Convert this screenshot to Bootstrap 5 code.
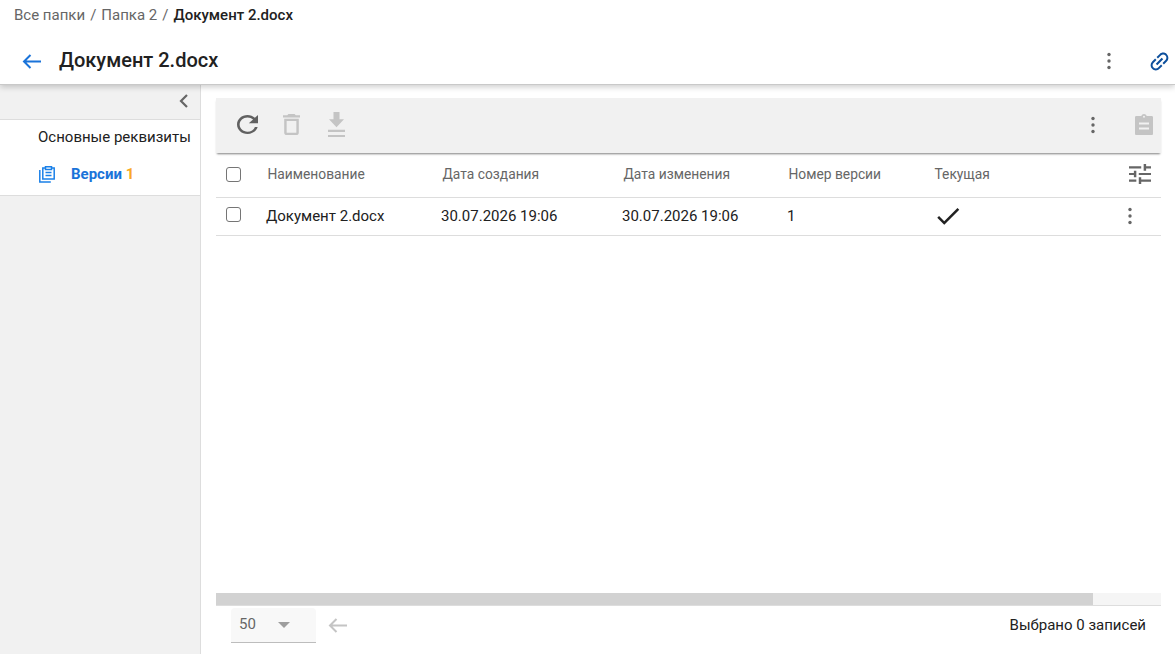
<!DOCTYPE html>
<html lang="ru">
<head>
  <meta charset="UTF-8" />
  <title>Документ 2.docx</title>
  <link href="https://cdn.jsdelivr.net/npm/bootstrap@5.3.3/dist/css/bootstrap.min.css" rel="stylesheet" />
  <style>
    html, body { height: 100%; overflow: hidden; }
    body { font-family: Roboto, "Liberation Sans", sans-serif; font-size: 15px; color: #212121; background: #fff; }
    .page-shell { height: 654px; }
    .top-head { height: 85px; border-bottom: 1px solid #c9c9c9; box-shadow: 0 2px 6px rgba(0,0,0,.2); position: relative; z-index: 2; background: #fff; }
    .crumbs { height: 31px; padding-left: 14px; color: #666; font-size: 15px; gap: 5px; }
    .crumbs b { font-weight: 500; color: #212121; }
    .title-row { height: 53px; padding: 4px 3px 0 22px; }
    .title-row h1 { font-size: 20px; font-weight: 500; margin: 0 0 0 18px; color: #212121; }
    .nudge { margin-top: 3px; }
    .side { width: 201px; flex: none; background: #f1f1f1; border-right: 1px solid #ddd; }
    .side-toggle { height: 34px; padding: 0 12px 2px 0; }
    .side-list { background: #fff; border-top: 1px solid #ddd; border-bottom: 1px solid #ddd; height: 77px; }
    .side-item { height: 35px; font-size: 15px; padding-left: 38px; color: #212121; }
    .side-item.on { padding-left: 39px; font-weight: 700; color: #1a73d9; gap: 16px; height: 38px; }
    .side-item .cnt { color: #f9a825; }
    .work { padding: 13px 14px 0 15px; min-width: 0; }
    .tools { height: 55px; background: #f1f1f1; box-shadow: 0 2px 2px -1px rgba(0,0,0,.5); padding: 0 8px 2px 21px; position: relative; }
    .trash-tool { margin-left: 25px; }
    .load-tool { margin-left: 28px; }
    .grid-area { flex: 1 1 auto; min-height: 0; }
    .doc-table { table-layout: fixed; width: 945px; margin: 0; font-size: 15px; color: #212121; }
    .doc-table th { font-weight: 400; font-size: 13.8px; color: #666; height: 44px; padding: 0 0 1px 1.5px; vertical-align: middle; border-bottom: 1px solid #ddd; }
    .doc-table td { height: 38px; padding: 0; vertical-align: middle; border-bottom: 1px solid #ddd; }
    .box { width: 15px; height: 15px; border: 1.5px solid #757575; border-radius: 3px; display: block; margin-left: 10px; }
    .doc-table th .box { margin-left: 8.5px; }
    .doc-table td .box { margin-top: -3px; }
    .tune-icon { margin-left: 16.5px; }
    .row-menu { margin-left: 7px; }
    .scroll-track { height: 13px; background: #f5f5f5; border-bottom: 1px solid #ddd; }
    .scroll-thumb { height: 12px; width: 877px; background: #d2d2d2; }
    .foot { height: 48px; padding: 2px 15px 12px 15px; }
    .size-pick { width: 85px; height: 35px; background: #f8f8f8; border-bottom: 1px solid #bdbdbd; border-radius: 4px 4px 0 0; padding-left: 8px; color: #666; font-size: 15px; }
    .caret-down { width: 0; height: 0; border-left: 6.5px solid transparent; border-right: 6.5px solid transparent; border-top: 6.5px solid #9e9e9e; margin-left: 22px; }
    .back-off { margin-left: 12px; }
    svg { display: block; flex: none; }
  </style>
</head>
<body>
  <div class="page-shell d-flex flex-column">
    <!-- Header -->
    <header class="top-head">
      <div class="crumbs d-flex align-items-center">
        <span>Все папки</span><span>/</span><span>Папка 2</span><span>/</span><b>Документ 2.docx</b>
      </div>
      <div class="title-row d-flex align-items-center">
        <svg class="nudge" width="19" height="15" viewBox="0 0 19 15" fill="none" stroke="#1a73d9" stroke-width="2"><path d="M19 7.500H2M8.500 1 2 7.500 8.500 14"/></svg>
        <h1>Документ 2.docx</h1>
        <div class="ms-auto d-flex align-items-center nudge" style="gap:26px">
          <svg width="24" height="24" viewBox="0 0 24 24" fill="#666"><circle cx="12" cy="5.500" r="1.700"/><circle cx="12" cy="12" r="1.700"/><circle cx="12" cy="18.500" r="1.700"/></svg>
          <svg width="25" height="25" viewBox="0 0 24 24" fill="#0d4f9c"><path transform="rotate(-45 12 12)" d="M3.900 12c0-1.710 1.390-3.100 3.100-3.100h4V7H7c-2.760 0-5 2.240-5 5s2.240 5 5 5h4v-1.900H7c-1.710 0-3.100-1.390-3.100-3.100zM8 13h8v-2H8v2zm9-6h-4v1.900h4c1.710 0 3.100 1.390 3.100 3.100s-1.390 3.100-3.100 3.100h-4V17h4c2.760 0 5-2.240 5-5s-2.240-5-5-5z"/></svg>
        </div>
      </div>
    </header>

    <div class="d-flex flex-grow-1" style="min-height:0">
      <!-- Sidebar -->
      <nav class="side">
        <div class="side-toggle d-flex align-items-center justify-content-end">
          <svg width="9" height="14" viewBox="0 0 9 14" fill="none" stroke="#666" stroke-width="2.200"><path d="M8 1 2 7l6 6"/></svg>
        </div>
        <div class="side-list">
          <div class="side-item d-flex align-items-center">Основные реквизиты</div>
          <div class="side-item on d-flex align-items-center">
            <svg width="16" height="18" viewBox="0 0 16 18" fill="none" stroke="#1a80e8" stroke-width="1.500"><path d="M.8 5v12h11"/><path d="M6.500 3H3.800v11h11.400V3h-2.700"/><path d="M6.500 1.800h6v2.700h-6zM6.500 7.500h6M6.500 10.500h6"/></svg>
            <span>Версии <span class="cnt">1</span></span>
          </div>
        </div>
      </nav>

      <!-- Main -->
      <main class="work flex-grow-1 d-flex flex-column">
        <div class="tools d-flex align-items-center">
          <svg width="21" height="19" viewBox="4 4 16 16" preserveAspectRatio="none" fill="#616161"><path d="M17.650 6.350C16.200 4.900 14.210 4 12 4c-4.420 0-7.990 3.580-7.990 8s3.570 8 7.990 8c3.730 0 6.840-2.550 7.730-6h-2.080c-.82 2.330-3.040 4-5.650 4-3.310 0-6-2.690-6-6s2.690-6 6-6c1.660 0 3.140.69 4.220 1.780L13 11h7V4l-2.350 2.350z"/></svg>
          <svg class="trash-tool" width="17" height="21" viewBox="5 3 14 18" preserveAspectRatio="none" fill="#c4c4c4"><path d="M6 19c0 1.100.9 2 2 2h8c1.100 0 2-.9 2-2V7H6v12zM8 9h8v10H8V9zm7.500-5l-1-1h-5l-1 1H5v2h14V4z"/></svg>
          <svg class="load-tool" width="17" height="25" viewBox="3.500 1 17 24.500" preserveAspectRatio="none" fill="#c4c4c4"><path d="M15 1H9v7H4.500l7.500 8 7.500-8H15V1zM3.500 18.500h17v2h-17zM3.500 23.500h17v2h-17z"/></svg>
          <div class="ms-auto d-flex align-items-center" style="gap:30px">
            <svg width="24" height="24" viewBox="0 0 24 24" fill="#666"><circle cx="12" cy="5.500" r="1.700"/><circle cx="12" cy="12" r="1.700"/><circle cx="12" cy="18.500" r="1.700"/></svg>
            <svg width="18" height="21" viewBox="3 1 18 21" fill="#c4c4c4"><path fill-rule="evenodd" d="M4.500 3H9.300C9.700 1.800 10.800 1 12 1s2.300.8 2.700 2h4.800c1.100 0 1.500.5 1.500 1.500v16c0 1-.4 1.500-1.500 1.500h-15C3.400 22 3 21.500 3 20.500v-16C3 3.500 3.400 3 4.500 3zM12 2.800a1 1 0 1 0 0 2 1 1 0 0 0 0-2zM7 9.500v2h10v-2H7zM7 14.500v2h10v-2H7z"/></svg>
          </div>
        </div>

        <div class="grid-area">
          <table class="table doc-table">
            <colgroup>
              <col style="width:50px"><col style="width:175px"><col style="width:181px"><col style="width:165px"><col style="width:146px"><col style="width:178px"><col style="width:50px">
            </colgroup>
            <thead>
              <tr>
                <th><span class="box"></span></th>
                <th>Наименование</th>
                <th>Дата создания</th>
                <th>Дата изменения</th>
                <th>Номер версии</th>
                <th>Текущая</th>
                <th>
                  <svg class="tune-icon" width="22" height="20" viewBox="3 3 18 18" preserveAspectRatio="none" fill="#666"><path d="M3 17v2h6v-2H3zM3 5v2h10V5H3zm10 16v-2h8v-2h-8v-2h-2v6h2zM7 9v2H3v2h4v2h2V9H7zm14 4v-2H11v2h10zm-6-4h2V7h4V5h-4V3h-2v6z"/></svg>
                </th>
              </tr>
            </thead>
            <tbody>
              <tr>
                <td><span class="box"></span></td>
                <td>Документ 2.docx</td>
                <td>30.07.2026 19:06</td>
                <td>30.07.2026 19:06</td>
                <td>1</td>
                <td>
                  <svg width="30" height="30" viewBox="0 0 24 24" fill="#212121"><path d="M9 16.170 4.830 12l-1.420 1.410L9 19 21 7l-1.410-1.410z"/></svg>
                </td>
                <td>
                  <svg class="row-menu" width="24" height="24" viewBox="0 0 24 24" fill="#666"><circle cx="12" cy="5.500" r="1.700"/><circle cx="12" cy="12" r="1.700"/><circle cx="12" cy="18.500" r="1.700"/></svg>
                </td>
              </tr>
            </tbody>
          </table>
        </div>

        <div class="scroll-track"><div class="scroll-thumb"></div></div>
        <div class="foot d-flex align-items-center">
          <div class="size-pick d-flex align-items-center">50<span class="caret-down"></span></div>
          <svg class="back-off" width="19" height="15" viewBox="0 0 19 15" fill="none" stroke="#c4c4c4" stroke-width="2"><path d="M19 7.500H2M8.500 1 2 7.500 8.500 14"/></svg>
          <span class="ms-auto">Выбрано 0 записей</span>
        </div>
      </main>
    </div>
  </div>
  <script src="https://cdn.jsdelivr.net/npm/bootstrap@5.3.3/dist/js/bootstrap.bundle.min.js"></script>
</body>
</html>
